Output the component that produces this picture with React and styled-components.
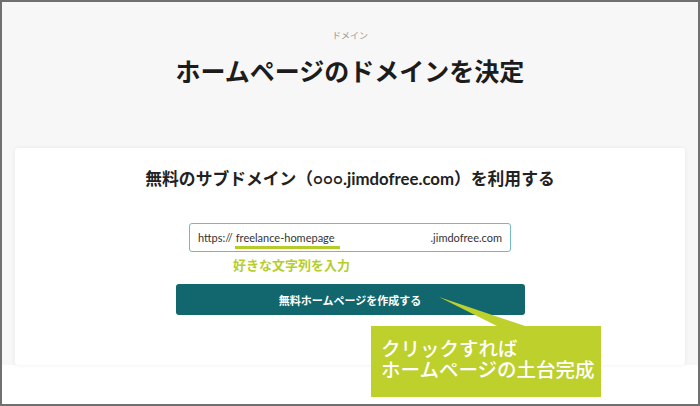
import React from "react";
import styled, { createGlobalStyle } from "styled-components";

const Global = createGlobalStyle`
  html, body { margin: 0; padding: 0; background: #fff; }
  body { font-family: Lato, "Noto Sans CJK JP", sans-serif; }
  * { box-sizing: border-box; }
`;

const Frame = styled.div`
  position: relative;
  width: 700px;
  height: 406px;
  border: 2px solid #707070;
  background: #fff;
  overflow: hidden;
`;

const Section = styled.section`
  background: #f7f7f7;
  padding: 28px 13px 0 13px;
  display: flex;
  flex-direction: column;
  align-items: center;
`;

const Eyebrow = styled.div`
  font-family: "Noto Sans CJK JP", sans-serif;
  font-size: 9px;
  line-height: 12px;
  color: #9a9a9a;
`;

const Title = styled.h1`
  margin: 11px 0 0;
  font-family: "Noto Sans CJK JP", sans-serif;
  font-size: 25px;
  line-height: 34px;
  font-weight: 700;
  color: #1c1c1c;
`;

const Card = styled.div`
  margin-top: 61px;
  width: 100%;
  background: #fff;
  border-radius: 3px;
  box-shadow: 0 0 4px rgba(0, 0, 0, 0.07);
  padding: 19px 0 50px;
  display: flex;
  flex-direction: column;
  align-items: center;
`;

const CardHeading = styled.h2`
  margin: 0;
  font-family: Lato, "Noto Sans CJK JP", sans-serif;
  font-size: 16.8px;
  line-height: 24px;
  font-weight: 700;
  color: #222;
`;

const Circles = styled.span`
  font-size: 15px;
`;

const Field = styled.div`
  margin-top: 32px;
  width: 322px;
  height: 29px;
  border: 1px solid #74b8c0;
  border-radius: 3px;
  display: flex;
  align-items: center;
  padding: 0 8px;
  font-family: Lato, "Noto Sans CJK JP", sans-serif;
  font-size: 11px;
  color: #333;
`;

const Prefix = styled.span`
  margin-right: 3px;
`;

const Typed = styled.span`
  position: relative;
  flex: 1;
  &::after {
    content: "";
    position: absolute;
    left: -1px;
    width: 105px;
    top: 15px;
    height: 3px;
    background: #b6cc2b;
  }
`;

const Suffix = styled.span``;

const HintRow = styled.div`
  width: 322px;
  padding-left: 44px;
  margin-top: 2px;
`;

const Hint = styled.span`
  font-family: "Noto Sans CJK JP", sans-serif;
  font-size: 13px;
  line-height: 16px;
  font-weight: 700;
  color: #b7cd2b;
`;

const CreateButton = styled.button`
  margin-top: 11px;
  width: 349px;
  height: 31px;
  border: none;
  border-radius: 3px;
  background: #11676d;
  color: #fff;
  font-family: "Noto Sans CJK JP", sans-serif;
  font-size: 11px;
  font-weight: 700;
  cursor: pointer;
`;

const Callout = styled.div`
  position: absolute;
  left: 369px;
  top: 324px;
  width: 230px;
  height: 71px;
  background: #bdd02c;
  padding: 11px 0 0 10px;
  font-family: "Noto Sans CJK JP", sans-serif;
  font-size: 19.5px;
  font-weight: 500;
  color: #fff;
`;

const CalloutLine = styled.div`
  line-height: 21px;
`;

const Pointer = styled.svg`
  position: absolute;
  left: 0;
  top: -29px;
  overflow: visible;
`;

export default function App() {
  return (
    <>
      <Global />
      <Frame>
        <Section>
          <Eyebrow>ドメイン</Eyebrow>
          <Title>ホームページのドメインを決定</Title>
          <Card>
            <CardHeading>
              無料のサブドメイン（<Circles>○○○</Circles>.jimdofree.com）を利用する
            </CardHeading>
            <Field>
              <Prefix>https://</Prefix>
              <Typed>freelance-homepage</Typed>
              <Suffix>.jimdofree.com</Suffix>
            </Field>
            <HintRow>
              <Hint>好きな文字列を入力</Hint>
            </HintRow>
            <CreateButton>無料ホームページを作成する</CreateButton>
          </Card>
        </Section>
        <Callout>
          <Pointer width="230" height="30" viewBox="0 0 230 30">
            <polygon points="68,0 128,30 157,30" fill="#bdd02c" />
          </Pointer>
          <CalloutLine>クリックすれば</CalloutLine>
          <CalloutLine>ホームページの土台完成</CalloutLine>
        </Callout>
      </Frame>
    </>
  );
}
